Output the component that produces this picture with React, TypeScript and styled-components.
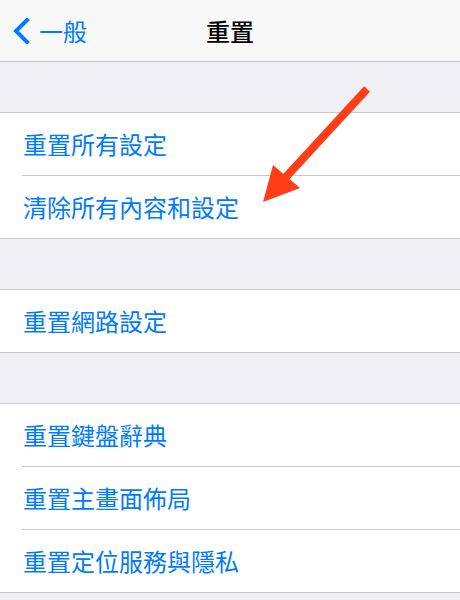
import React from 'react';
import styled, { createGlobalStyle } from 'styled-components';

const GlobalStyle = createGlobalStyle`
  html, body {
    margin: 0;
    padding: 0;
    background: #efeff4;
  }
  body {
    font-family: "Noto Sans CJK TC", "Noto Sans", sans-serif;
  }
`;

const Screen = styled.div`
  position: relative;
  width: 460px;
  height: 600px;
  overflow: hidden;
  background: #efeff4;
`;

const NavBar = styled.header`
  display: grid;
  grid-template-columns: 1fr auto 1fr;
  align-items: center;
  height: 61px;
  background: #f8f8f8;
  border-bottom: 1px solid #c4c4c8;
`;

const BackButton = styled.div`
  display: flex;
  align-items: center;
  gap: 9px;
  padding-left: 12px;
  color: #007aff;
  font-size: 24px;
  line-height: 1;
`;

const Title = styled.h1`
  margin: 0;
  color: #000;
  font-size: 24px;
  font-weight: 500;
  line-height: 1;
`;

const Gap = styled.div`
  height: 50px;
`;

const Group = styled.ul`
  margin: 0;
  padding: 0 0 0 22px;
  list-style: none;
  background: #fff;
  border-top: 1px solid #c8c7cc;
  border-bottom: 1px solid #c8c7cc;
`;

const Row = styled.li`
  display: flex;
  align-items: center;
  height: 62px;
  padding-left: 1px;
  color: #007aff;
  font-size: 24px;
  line-height: 1;

  & + & {
    border-top: 1px solid #c8c7cc;
  }
`;

const Arrow = styled.svg`
  position: absolute;
  left: 0;
  top: 0;
  pointer-events: none;
`;

const groups = [
  ['重置所有設定', '清除所有內容和設定'],
  ['重置網路設定'],
  ['重置鍵盤辭典', '重置主畫面佈局', '重置定位服務與隱私'],
];

function ChevronLeft() {
  return (
    <svg width="18" height="26" viewBox="0 0 18 26">
      <path d="M15 2 L4 13 L15 24" fill="none" stroke="#007aff" strokeWidth="4" strokeLinecap="square" />
    </svg>
  );
}

export default function App() {
  return (
    <Screen>
      <GlobalStyle />
      <NavBar>
        <BackButton>
          <ChevronLeft />
          <span>一般</span>
        </BackButton>
        <Title>重置</Title>
        <div />
      </NavBar>
      {groups.map((items, i) => (
        <React.Fragment key={i}>
          <Gap />
          <Group>
            {items.map(label => (
              <Row key={label}>{label}</Row>
            ))}
          </Group>
        </React.Fragment>
      ))}
      <Arrow width="460" height="600" viewBox="0 0 460 600">
        <line x1="367" y1="89" x2="285" y2="178" stroke="#ff3d17" strokeWidth="8" />
        <polygon points="263,202 273,165 300,188" fill="#ff3d17" />
      </Arrow>
    </Screen>
  );
}
